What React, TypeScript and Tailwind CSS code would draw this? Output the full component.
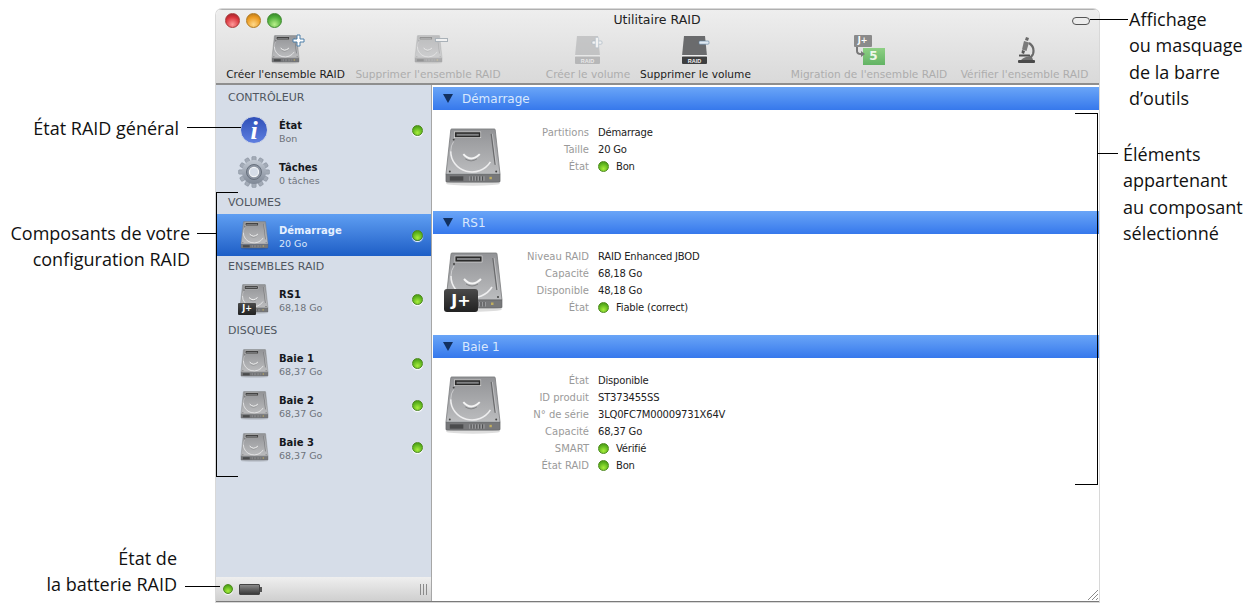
import React, { useId } from 'react';

const HdIcon = ({ size = 58 }: { size?: number }) => {
  const id = useId();
  return (
    <svg width={size} height={size} viewBox="0 0 60 60" className="shrink-0">
      <defs>
        <linearGradient id={id} x1="0" y1="0" x2="0" y2="1">
          <stop offset="0" stopColor="#929396" />
          <stop offset="1" stopColor="#bcbdbf" />
        </linearGradient>
      </defs>
      <ellipse cx="30" cy="57.5" rx="28" ry="2.2" fill="#00000022" />
      <path d="M7 2 Q7 1 8 1 H52 Q53 1 53 2 L58 48 H2 Z" fill={`url(#${id})`} stroke="#77787a" strokeWidth="0.8" />
      <rect x="11" y="4" width="27" height="6" fill="#2b2b2b" stroke="#dcdcdc" strokeWidth="0.7" />
      <rect x="13" y="6" width="23" height="2" fill="#808183" />
      <path d="M49 6 L53 38" stroke="#6a6b6d" strokeWidth="1.5" />
      <path d="M50 6 L54 38" stroke="#dcdcde" strokeWidth="0.6" />
      <path d="M7 24 A22 21 0 0 0 48 35" fill="none" stroke="#eeeeef" strokeWidth="1.6" />
      <path d="M7 24 Q7 18 10 14" fill="none" stroke="#d8d8da" strokeWidth="0.8" />
      <path d="M20 27 Q28 36 37 27" fill="none" stroke="#f5f5f5" strokeWidth="2" />
      <path d="M22 32 Q28 36 34 32" fill="none" stroke="#77787a" strokeWidth="0.8" />
      <circle cx="10" cy="12" r="1" fill="#444" />
      <circle cx="6" cy="45" r="1" fill="#444" />
      <circle cx="54" cy="45" r="1" fill="#444" />
      <path d="M2 48 H58 V55 Q58 56 57 56 H3 Q2 56 2 55 Z" fill="#77787a" stroke="#5e5f62" strokeWidth="0.6" />
      <rect x="6" y="50" width="14" height="4.5" fill="#4a4b4c" />
      <rect x="26" y="50" width="16" height="4.5" fill="#9a9b9d" />
      <path d="M28 50 V54.5 M31 50 V54.5 M34 50 V54.5 M37 50 V54.5 M40 50 V54.5" stroke="#3c3d3e" strokeWidth="1" />
      <rect x="47" y="50.5" width="2.5" height="2.5" fill="#c0ae60" />
    </svg>
  );
};

const RaidHd = ({ size, big }: { size: number; big?: boolean }) => (
  <div className="relative shrink-0" style={{ width: size, height: size }}>
    <HdIcon size={size} />
    <div
      className={`absolute left-0 flex items-center justify-center bg-gradient-to-b from-[#4a4a4a] to-[#222222] font-bold text-white ${
        big ? 'bottom-0 w-[34px] h-[23px] rounded-[3px] text-[16px]' : 'bottom-[-1px] left-[-1px] w-[18px] h-[12px] rounded-[1px] text-[8px]'
      }`}
    >
      J+
    </div>
  </div>
);

const Dot = ({ size = 11 }: { size?: number }) => (
  <span
    className="inline-block shrink-0 rounded-full border border-[#4d8a1c] bg-[radial-gradient(circle_at_50%_75%,#a8ee3c,#5fb51e_60%,#3f8a12)] shadow-[0_1px_1px_#ffffff]"
    style={{ width: size, height: size }}
  />
);

const Light = ({ cls }: { cls: string }) => <span className={`block w-[15px] h-[15px] rounded-full border ${cls}`} />;

const Gear = () => (
  <svg width="32" height="32" viewBox="0 0 32 32" className="shrink-0 -mx-[2px]">
    <defs>
      <linearGradient id="gearFill" x1="0" y1="0" x2="0" y2="1">
        <stop offset="0" stopColor="#c2c9d3" />
        <stop offset="1" stopColor="#7f8896" />
      </linearGradient>
    </defs>
    {[0, 30, 60, 90, 120, 150, 180, 210, 240, 270, 300, 330].map((a) => (
      <rect key={a} x="13.8" y="0.5" width="4.4" height="6" rx="1" fill="#a2aab6" stroke="#7a8390" strokeWidth="0.4" transform={`rotate(${a} 16 16)`} />
    ))}
    <circle cx="16" cy="16" r="12" fill="url(#gearFill)" />
    <circle cx="16" cy="16" r="7.5" fill="#8d95a2" stroke="#67707c" strokeWidth="1" />
    <circle cx="16" cy="16" r="4.6" fill="#d6dde8" stroke="#f2f4f7" strokeWidth="1.2" />
  </svg>
);

const VolumeIcon = ({ sign, dark }: { sign: '+' | '-'; dark?: boolean }) => (
  <svg width="29" height="30" viewBox="0 0 29 30">
    <path d="M3 1 H24 L26 21 H1 Z" fill={dark ? '#6a6b6d' : '#a5a6a8'} />
    <rect x="1" y="21" width="25" height="8" rx="1" fill={dark ? '#3e3f40' : '#8f9092'} />
    <rect x="1" y="20" width="25" height="1.5" fill="#eeeeee" />
    <text x="13.5" y="27.5" textAnchor="middle" fontSize="5.5" fontWeight="700" fill="#f2f2f2" fontFamily="Liberation Sans, sans-serif">
      RAID
    </text>
    <rect x="18" y="6" width="10" height="3.2" rx="1" fill={dark ? '#dfe9f2' : '#ffffff'} stroke="#5f7f9c" strokeWidth="0.6" />
    {sign === '+' && <rect x="21.4" y="2.4" width="3.2" height="10.4" rx="1" fill="#ffffff" stroke="#7f9cb5" strokeWidth="0.6" />}
  </svg>
);

const Microscope = () => (
  <svg width="18" height="28" viewBox="0 0 18 28" className="ml-[4px]">
    <path d="M8 1 L11 2 L10 5 L7 4 Z" fill="#6a6a6a" />
    <path d="M6 5 L11 6.5 L8.5 15 L4 13.5 Z" fill="#7a7a7a" />
    <path d="M4 14 L7 15 L6 18 L3.5 17 Z" fill="#555555" />
    <path d="M11 7 Q17 11 15 18 Q14 21 10 22" fill="none" stroke="#6a6a6a" strokeWidth="2.2" />
    <rect x="1" y="18.5" width="11" height="2" rx="0.5" fill="#505050" />
    <path d="M3 24 Q8 19 14 21 L15 24 Z" fill="#707070" />
    <rect x="0" y="24" width="17" height="3" rx="1" fill="#4a4a4a" />
  </svg>
);

const Migration = () => (
  <div className="relative w-[31px] h-[30px]">
    <div className="absolute left-0 top-0 w-[18px] h-[12px] bg-[#8a8a8a] rounded-[1px] text-white text-[8px] leading-[12px] text-center font-bold">J+</div>
    <div className="absolute right-0 bottom-0 w-[22px] h-[17px] bg-gradient-to-b from-[#8ed084] to-[#62b364] text-[#eef8ea] text-[12px] leading-[17px] text-center font-bold">5</div>
    <svg className="absolute left-[1px] top-[12px]" width="10" height="12" viewBox="0 0 10 12">
      <path d="M2 0 V4 Q2 7 6 7 H8" fill="none" stroke="#777" strokeWidth="2" />
      <path d="M6 4 L10 7 L6 10 Z" fill="#777" />
    </svg>
  </div>
);

const PlusMark = () => (
  <svg className="absolute right-[-5px] top-[-1px]" width="13" height="13" viewBox="0 0 13 13">
    <path d="M5 1 H8 V5 H12 V8 H8 V12 H5 V8 H1 V5 H5 Z" fill="#ffffff" stroke="#4d7ea8" strokeWidth="1" />
  </svg>
);

const tools: { label: string; off: boolean; faded: boolean; ml: string; w: string; icon: React.ReactNode }[] = [
  {
    label: "Créer l'ensemble RAID", off: false, faded: false, ml: 'ml-[10px]', w: 'w-[119px]',
    icon: (
      <div className="relative w-[29px] h-[30px]">
        <HdIcon size={29} />
        <PlusMark />
      </div>
    ),
  },
  {
    label: "Supprimer l'ensemble RAID", off: true, faded: true, ml: 'ml-[10px]', w: 'w-[146px]',
    icon: (
      <div className="relative w-[29px] h-[30px]">
        <HdIcon size={29} />
        <span className="absolute right-[-5px] top-[3px] block w-[13px] h-[4px] bg-white border border-[#6f7f8c]" />
      </div>
    ),
  },
  { label: 'Créer le volume', off: true, faded: true, ml: 'ml-[45px]', w: 'w-[84px]', icon: <VolumeIcon sign="+" /> },
  { label: 'Supprimer le volume', off: false, faded: false, ml: 'ml-[10px]', w: 'w-[111px]', icon: <VolumeIcon sign="-" dark /> },
  { label: "Migration de l'ensemble RAID", off: true, faded: false, ml: 'ml-[39px]', w: 'w-[158px]', icon: <Migration /> },
  { label: "Vérifier l'ensemble RAID", off: true, faded: false, ml: 'ml-[12px]', w: 'w-[129px]', icon: <Microscope /> },
];

const SideHead = ({ children, tall }: { children: React.ReactNode; tall?: boolean }) => (
  <div className={`${tall ? 'h-[22px]' : 'h-[21px]'} pl-[12px] flex items-center text-[11px] font-medium text-[#4f5660]`}>{children}</div>
);

const SideRow = ({ icon, name, sub, dot = true, active }: { icon: React.ReactNode; name: string; sub: string; dot?: boolean; active?: boolean }) => (
  <div className={`h-[42px] pl-[24px] pr-[8px] flex items-center ${active ? 'bg-gradient-to-b from-[#5f9ef2] to-[#1d5ec6]' : ''}`}>
    <div className="w-[28px] flex justify-center">{icon}</div>
    <div className="ml-[11px] pt-[4px] flex-1 leading-[13px]">
      <div className={`text-[10px] font-bold ${active ? 'text-[#e6f0ff]' : 'text-[#15171c]'}`}>{name}</div>
      <div className={`text-[9.5px] ${active ? 'text-[#dbe8fb]' : 'text-[#6d727a]'}`}>{sub}</div>
    </div>
    {dot && <Dot />}
  </div>
);

const Band = ({ title }: { title: string }) => (
  <div className="h-[23px] flex items-center pl-[10px] bg-gradient-to-b from-[#6aa5f7] to-[#3678ec]">
    <svg width="10" height="9" viewBox="0 0 10 9"><path d="M0 0 H10 L5 9 Z" fill="#12305f" /></svg>
    <span className="ml-[9px] text-[12px] text-[#d9e8fd]">{title}</span>
  </div>
);

const Info = ({ rows, icon, h }: { rows: { k: string; v: string; dot?: boolean }[]; icon: React.ReactNode; h: string }) => (
  <div className={`flex items-start pl-[11px] pt-[14px] bg-white ${h}`}>
    <div className="w-[58px] mt-[4px]">{icon}</div>
    <div className="grid grid-cols-[87px_auto] gap-x-[9px] auto-rows-[17px] items-center leading-[17px]">
      {rows.map((r) => (
        <React.Fragment key={r.k}>
          <div className="text-right text-[10px] text-[#9a9a9a] whitespace-nowrap">{r.k}</div>
          <div className="flex items-center text-[10px] tracking-[-0.2px] text-[#222222] whitespace-nowrap">
            {r.dot && <span className="mr-[7px] flex"><Dot size={11} /></span>}
            {r.v}
          </div>
        </React.Fragment>
      ))}
    </div>
  </div>
);

// callout lines and labels around the window
const L = ({ c }: { c: string }) => <div className={`absolute bg-black ${c}`} />;

const Note = ({ c, lines }: { c: string; lines: string[] }) => (
  <div className={`absolute text-[18px] leading-[26.3px] text-[#111111] font-['Open_Sans',sans-serif] whitespace-nowrap ${c}`}>
    {lines.map((t) => (
      <div key={t}>{t}</div>
    ))}
  </div>
);

export default function App() {
  return (
    <div className="relative w-[1251px] h-[606px] bg-white overflow-hidden font-['DejaVu_Sans',sans-serif] pt-[9px] pl-[216px]">
      <div className="w-[883px] h-[593px] flex flex-col rounded-t-[6px] overflow-hidden border-b border-[#7a7a7a] shadow-[0_0_0_1px_#d8d8d8]">
        {/* title + toolbar */}
        <div className="h-[76px] shrink-0 bg-gradient-to-b from-[#eeeeee] to-[#d9d9d9] border-t border-[#b0b0b0] border-b-2 border-b-[#8e8e8e]">
          <div className="relative h-[21px] flex items-center pl-[9px] gap-[6px]">
            <Light cls="border-[#a83a3a] bg-[radial-gradient(circle_at_50%_80%,#ff9a9a,#d8323a_60%,#8a2028)]" />
            <Light cls="border-[#b07a20] bg-[radial-gradient(circle_at_50%_80%,#ffd98a,#eb9a20_60%,#a8701c)]" />
            <Light cls="border-[#3f8a30] bg-[radial-gradient(circle_at_50%_80%,#b8f08a,#4fae3a_60%,#2f7a26)]" />
            <div className="flex-1 text-center text-[12.5px] text-[#222222] pr-[40px]">Utilitaire RAID</div>
            <div className="w-[18px] h-[8px] mr-[9px] rounded-full border border-[#555555] bg-[#ececec]" />
          </div>
          <div className="flex mt-[4px]">
            {tools.map((t) => (
              <div key={t.label} className={`${t.ml} ${t.w} flex flex-col items-center shrink-0`}>
                <div className={`h-[30px] flex items-center ${t.faded ? 'opacity-50' : ''}`}>{t.icon}</div>
                <div className={`mt-[2px] text-[10.6px] whitespace-nowrap ${t.off ? 'text-[#adadad]' : 'text-[#1b1b1b]'}`}>{t.label}</div>
              </div>
            ))}
          </div>
        </div>

        <div className="flex flex-1 min-h-0">
          {/* sidebar */}
          <div className="w-[216px] shrink-0 flex flex-col bg-[#d6dde8] border-r border-[#a6a6a6]">
            <div className="flex-1 pt-[3px]">
              <SideHead>CONTRÔLEUR</SideHead>
              <SideRow
                name="État"
                sub="Bon"
                icon={
                  <div className="w-[28px] h-[28px] rounded-full bg-gradient-to-b from-[#2f4fb8] to-[#5f7fe0] border border-[#cfd6e6] flex items-center justify-center text-white text-[26px] font-bold italic font-['Liberation_Serif',serif]">
                    i
                  </div>
                }
              />
              <SideRow name="Tâches" sub="0 tâches" dot={false} icon={<Gear />} />
              <SideHead>VOLUMES</SideHead>
              <SideRow name="Démarrage" sub="20 Go" active icon={<HdIcon size={29} />} />
              <SideHead tall>ENSEMBLES RAID</SideHead>
              <SideRow name="RS1" sub="68,18 Go" icon={<RaidHd size={30} />} />
              <SideHead tall>DISQUES</SideHead>
              <SideRow name="Baie 1" sub="68,37 Go" icon={<HdIcon size={29} />} />
              <SideRow name="Baie 2" sub="68,37 Go" icon={<HdIcon size={29} />} />
              <SideRow name="Baie 3" sub="68,37 Go" icon={<HdIcon size={29} />} />
            </div>
            <div className="h-[24px] flex items-center pl-[7px] pr-[4px] bg-gradient-to-b from-[#efefef] to-[#cfcfcf]">
              <Dot size={10} />
              <div className="ml-[6px] w-[21px] h-[11px] border border-[#444444] bg-gradient-to-b from-[#8a8a8a] to-[#3a3a3a] rounded-[1px]" />
              <div className="w-[2px] h-[5px] bg-[#555555]" />
              <div className="ml-auto w-[7px] h-[11px] border-x border-[#8a8a8a] flex justify-center">
                <div className="w-px bg-[#8a8a8a]" />
              </div>
            </div>
          </div>

          {/* main pane */}
          <div className="relative flex-1 min-w-0 bg-white ml-px pt-[2px]">
            <Band title="Démarrage" />
            <Info
              h="h-[101px]"
              icon={<HdIcon size={58} />}
              rows={[
                { k: 'Partitions', v: 'Démarrage' },
                { k: 'Taille', v: '20 Go' },
                { k: 'État', v: 'Bon', dot: true },
              ]}
            />
            <Band title="RS1" />
            <Info
              h="h-[101px]"
              icon={<RaidHd size={60} big />}
              rows={[
                { k: 'Niveau RAID', v: 'RAID Enhanced JBOD' },
                { k: 'Capacité', v: '68,18 Go' },
                { k: 'Disponible', v: '48,18 Go' },
                { k: 'État', v: 'Fiable (correct)', dot: true },
              ]}
            />
            <Band title="Baie 1" />
            <Info
              h="h-[140px]"
              icon={<HdIcon size={58} />}
              rows={[
                { k: 'État', v: 'Disponible' },
                { k: 'ID produit', v: 'ST373455SS' },
                { k: 'N° de série', v: '3LQ0FC7M00009731X64V' },
                { k: 'Capacité', v: '68,37 Go' },
                { k: 'SMART', v: 'Vérifié', dot: true },
                { k: 'État RAID', v: 'Bon', dot: true },
              ]}
            />
            <svg className="absolute right-[1px] bottom-[1px]" width="10" height="10" viewBox="0 0 10 10">
              <path d="M10 0 L0 10 M10 4 L4 10 M10 8 L8 10" stroke="#8a8a8a" strokeWidth="1" />
            </svg>
          </div>
        </div>
      </div>

      {/* callouts */}
      <L c="left-[1090px] top-[19px] w-[38px] h-[1px]" />
      <Note c="left-[1129px] top-[6px]" lines={['Affichage', 'ou masquage', 'de la barre', 'd’outils']} />
      <L c="left-[1075px] top-[113px] w-[23px] h-[1px]" />
      <L c="left-[1097px] top-[113px] w-[1px] h-[372px]" />
      <L c="left-[1075px] top-[484px] w-[23px] h-[1px]" />
      <L c="left-[1097px] top-[153px] w-[21px] h-[1px]" />
      <Note c="left-[1123px] top-[141px]" lines={['Éléments', 'appartenant', 'au composant', 'sélectionné']} />
      <Note c="right-[1072px] top-[115px]" lines={['État RAID général']} />
      <L c="left-[187px] top-[127px] w-[54px] h-[1px]" />
      <Note c="right-[1061px] top-[220px] text-right" lines={['Composants de votre', 'configuration RAID']} />
      <L c="left-[197px] top-[233px] w-[20px] h-[1px]" />
      <L c="left-[216px] top-[192px] w-[1px] h-[285px]" />
      <L c="left-[216px] top-[192px] w-[22px] h-[1px]" />
      <L c="left-[216px] top-[476px] w-[22px] h-[1px]" />
      <Note c="right-[1074px] top-[545px] text-right" lines={['État de', 'la batterie RAID']} />
      <L c="left-[185px] top-[586px] w-[35px] h-[1px]" />
    </div>
  );
}
